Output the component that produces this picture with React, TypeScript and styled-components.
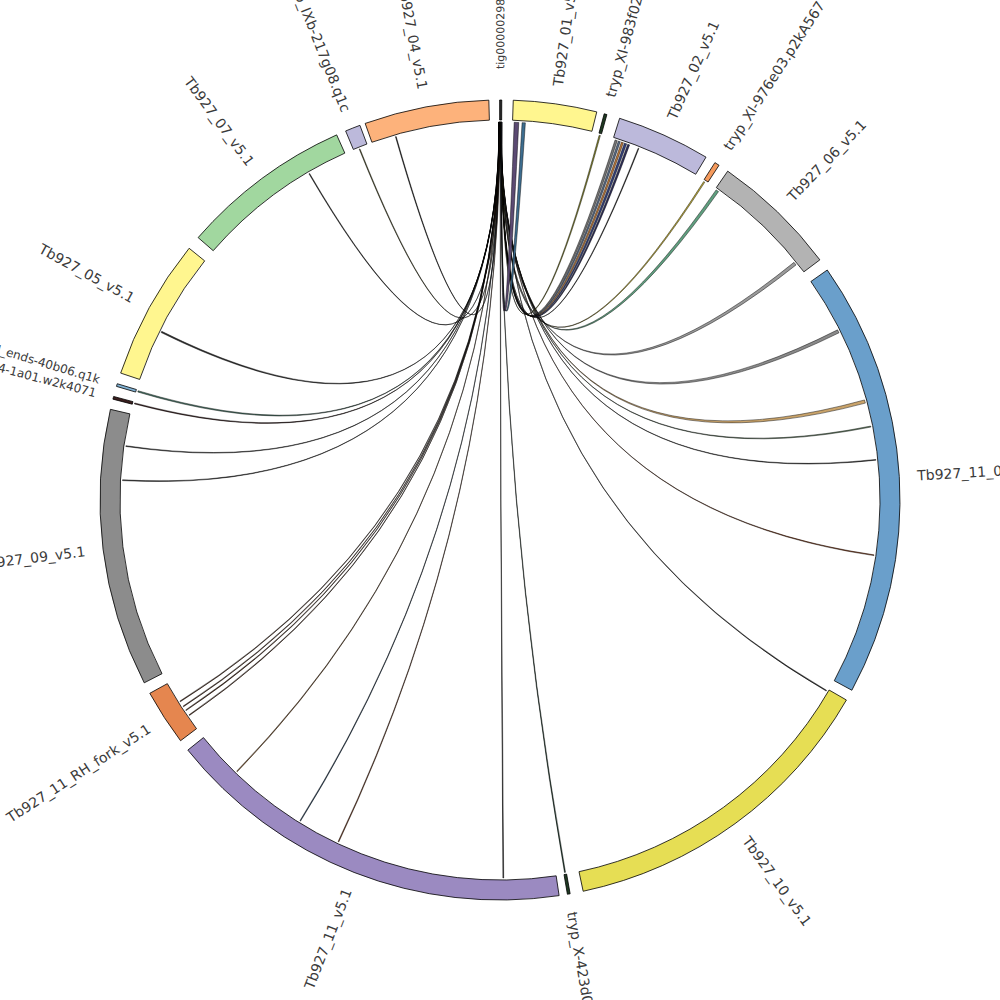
import styled, { createGlobalStyle } from "styled-components"

const GlobalStyle = createGlobalStyle`
  html, body {
    margin: 0;
    padding: 0;
    background: #ffffff;
  }
`

const CX = 500
const CY = 500
const R_IN = 380
const R_OUT = 400
const R_LINK = 378
const R_LABEL = 418

type Segment = { name: string; start: number; end: number; color: string; size?: number; r?: number }
type Link = { at: number; width: number; color: string }

// karyotype, angles in degrees clockwise from 3 o'clock
const segments: Segment[] = [
    { name: "tig00000298", start: -90.05, end: -89.75, color: "#2b2b2b", size: 11, r: 431 },
    { name: "Tb927_01_v5.1", start: -88.1, end: -76.0, color: "#fff68f" },
    { name: "tryp_XI-983f02.q1k", start: -74.9, end: -74.5, color: "#1f3a22" },
    { name: "Tb927_02_v5.1", start: -72.6, end: -59.0, color: "#bcb9db" },
    { name: "tryp_XI-976e03.p2kA567", start: -57.5, end: -56.8, color: "#f59a5c" },
    { name: "Tb927_06_v5.1", start: -55.3, end: -36.9, color: "#b3b3b3" },
    { name: "Tb927_11_01_v5.1", start: -35.1, end: 28.4, color: "#6a9fcb" },
    { name: "Tb927_10_v5.1", start: 30.0, end: 78.0, color: "#e6de54" },
    { name: "tryp_X-423d04.p1k", start: 79.9, end: 80.3, color: "#1f3a22" },
    { name: "Tb927_11_v5.1", start: 81.5, end: 141.3, color: "#9b8ac1" },
    { name: "Tb927_11_RH_fork_v5.1", start: 143.0, end: 151.1, color: "#e5864f" },
    { name: "Tb927_09_v5.1", start: 152.8, end: 193.1, color: "#8c8c8c" },
    { name: "tryp_XI-4-1a01.w2k4071", start: 194.6, end: 195.0, color: "#3b1f1f", size: 12 },
    { name: "tryp_XI_ends-40b06.q1k", start: 196.5, end: 196.9, color: "#80b1d3", size: 12 },
    { name: "Tb927_05_v5.1", start: 198.5, end: 219.0, color: "#fff68f" },
    { name: "Tb927_07_v5.1", start: 221.0, end: 245.9, color: "#a1d79f" },
    { name: "tryp_IXb-217g08.q1c", start: 247.3, end: 249.5, color: "#bcb9db" },
    { name: "Tb927_04_v5.1", start: 250.3, end: 268.4, color: "#fdb27b" },
]

// every link leaves from tig00000298
const links: Link[] = [
    { at: 254.0, width: 0.12, color: "#222222" },
    { at: 248.2, width: 0.12, color: "#5a5a2a" },
    { at: 239.7, width: 0.12, color: "#222222" },
    { at: 206.4, width: 0.2, color: "#333333" },
    { at: 196.7, width: 0.2, color: "#4a7a6a" },
    { at: 194.8, width: 0.15, color: "#3b1f1f" },
    { at: 188.2, width: 0.12, color: "#333333" },
    { at: 183.0, width: 0.12, color: "#333333" },
    { at: 147.8, width: 0.12, color: "#5a3a2a" },
    { at: 146.9, width: 0.12, color: "#5a3a2a" },
    { at: 146.2, width: 0.12, color: "#5a3a2a" },
    { at: 145.3, width: 0.12, color: "#5a3a2a" },
    { at: 134.1, width: 0.12, color: "#8a5a2a" },
    { at: 121.9, width: 0.12, color: "#2a4a6a" },
    { at: 115.3, width: 0.12, color: "#8a4a2a" },
    { at: 89.5, width: 0.12, color: "#222222" },
    { at: 80.1, width: 0.15, color: "#1a3a2a" },
    { at: 30.3, width: 0.12, color: "#333333" },
    { at: 8.4, width: 0.12, color: "#a0522d" },
    { at: -6.1, width: 0.12, color: "#333333" },
    { at: -11.2, width: 0.15, color: "#6a8a6a" },
    { at: -15.1, width: 0.5, color: "#c9a36a" },
    { at: -26.5, width: 0.5, color: "#8a8a8a" },
    { at: -38.7, width: 0.5, color: "#9a9a9a" },
    { at: -54.9, width: 0.45, color: "#5f9f7f" },
    { at: -57.3, width: 0.2, color: "#c5b23a" },
    { at: -68.5, width: 0.12, color: "#2a2a2a" },
    { at: -70.1, width: 0.3, color: "#2f2f5a" },
    { at: -70.6, width: 0.35, color: "#34407a" },
    { at: -71.1, width: 0.3, color: "#c07a3a" },
    { at: -71.6, width: 0.3, color: "#5a6e8a" },
    { at: -72.1, width: 0.35, color: "#777777" },
    { at: -74.7, width: 0.2, color: "#8a8a2a" },
    { at: -86.4, width: 0.5, color: "#3d6d8f" },
    { at: -87.5, width: 0.7, color: "#5b4a72" },
]

const rad = (d: number) => (d * Math.PI) / 180
const pt = (r: number, a: number) => [CX + r * Math.cos(rad(a)), CY + r * Math.sin(rad(a))]
const f = (n: number) => n.toFixed(2)

function sectorPath(s: number, e: number) {
    const [x1, y1] = pt(R_OUT, s)
    const [x2, y2] = pt(R_OUT, e)
    const [x3, y3] = pt(R_IN, e)
    const [x4, y4] = pt(R_IN, s)
    const large = e - s > 180 ? 1 : 0
    return `M${f(x1)} ${f(y1)} A${R_OUT} ${R_OUT} 0 ${large} 1 ${f(x2)} ${f(y2)} L${f(x3)} ${f(y3)} A${R_IN} ${R_IN} 0 ${large} 0 ${f(x4)} ${f(y4)} Z`
}

function ribbonPath(a0: number, a1: number, b0: number, b1: number) {
    const [ax0, ay0] = pt(R_LINK, a0)
    const [ax1, ay1] = pt(R_LINK, a1)
    const [bx0, by0] = pt(R_LINK, b0)
    const [bx1, by1] = pt(R_LINK, b1)
    return `M${f(ax0)} ${f(ay0)} A${R_LINK} ${R_LINK} 0 0 1 ${f(ax1)} ${f(ay1)} Q${CX} ${CY} ${f(bx0)} ${f(by0)} A${R_LINK} ${R_LINK} 0 0 1 ${f(bx1)} ${f(by1)} Q${CX} ${CY} ${f(ax0)} ${f(ay0)} Z`
}

const Page = styled.div`
    width: 1000px;
    height: 1000px;
    overflow: hidden;
    background: #ffffff;
`

const Plot = styled.svg`
    display: block;
    width: 1000px;
    height: 1000px;
`

const Ideogram = styled.path<{ $fill: string }>`
    fill: ${(p) => p.$fill};
    stroke: #000000;
    stroke-width: 0.8;
`

const Ribbon = styled.path<{ $fill: string }>`
    fill: ${(p) => p.$fill};
    stroke: #000000;
    stroke-width: 0.5;
    stroke-opacity: 0.9;
`

const LabelText = styled.text<{ $size: number }>`
    font-family: "DejaVu Sans", Verdana, sans-serif;
    font-size: ${(p) => p.$size}px;
    fill: #3a3a3a;
`

function Label({ seg }: { seg: Segment }) {
    const mid = (seg.start + seg.end) / 2
    const left = Math.cos(rad(mid)) < 0
    const [x, y] = pt(seg.r ?? R_LABEL, mid)
    const rot = left ? mid - 180 : mid
    return (
        <LabelText
            $size={seg.size ?? 14}
            x={f(x)}
            y={f(y)}
            transform={`rotate(${f(rot)} ${f(x)} ${f(y)})`}
            textAnchor={left ? "end" : "start"}
            dominantBaseline="central"
        >
            {seg.name}
        </LabelText>
    )
}

export default function App() {
    const n = links.length
    return (
        <Page>
            <GlobalStyle />
            <Plot viewBox="0 0 1000 1000">
                {links.map((l, i) => {
                    const a0 = -90.2 + (0.45 * i) / (n - 1)
                    return (
                        <Ribbon
                            key={i}
                            $fill={l.color}
                            d={ribbonPath(a0, a0 + 0.04, l.at - l.width / 2, l.at + l.width / 2)}
                        />
                    )
                })}
                {segments.map((s) => (
                    <Ideogram key={s.name} $fill={s.color} d={sectorPath(s.start, s.end)} />
                ))}
                {segments.map((s) => (
                    <Label key={s.name} seg={s} />
                ))}
            </Plot>
        </Page>
    )
}
